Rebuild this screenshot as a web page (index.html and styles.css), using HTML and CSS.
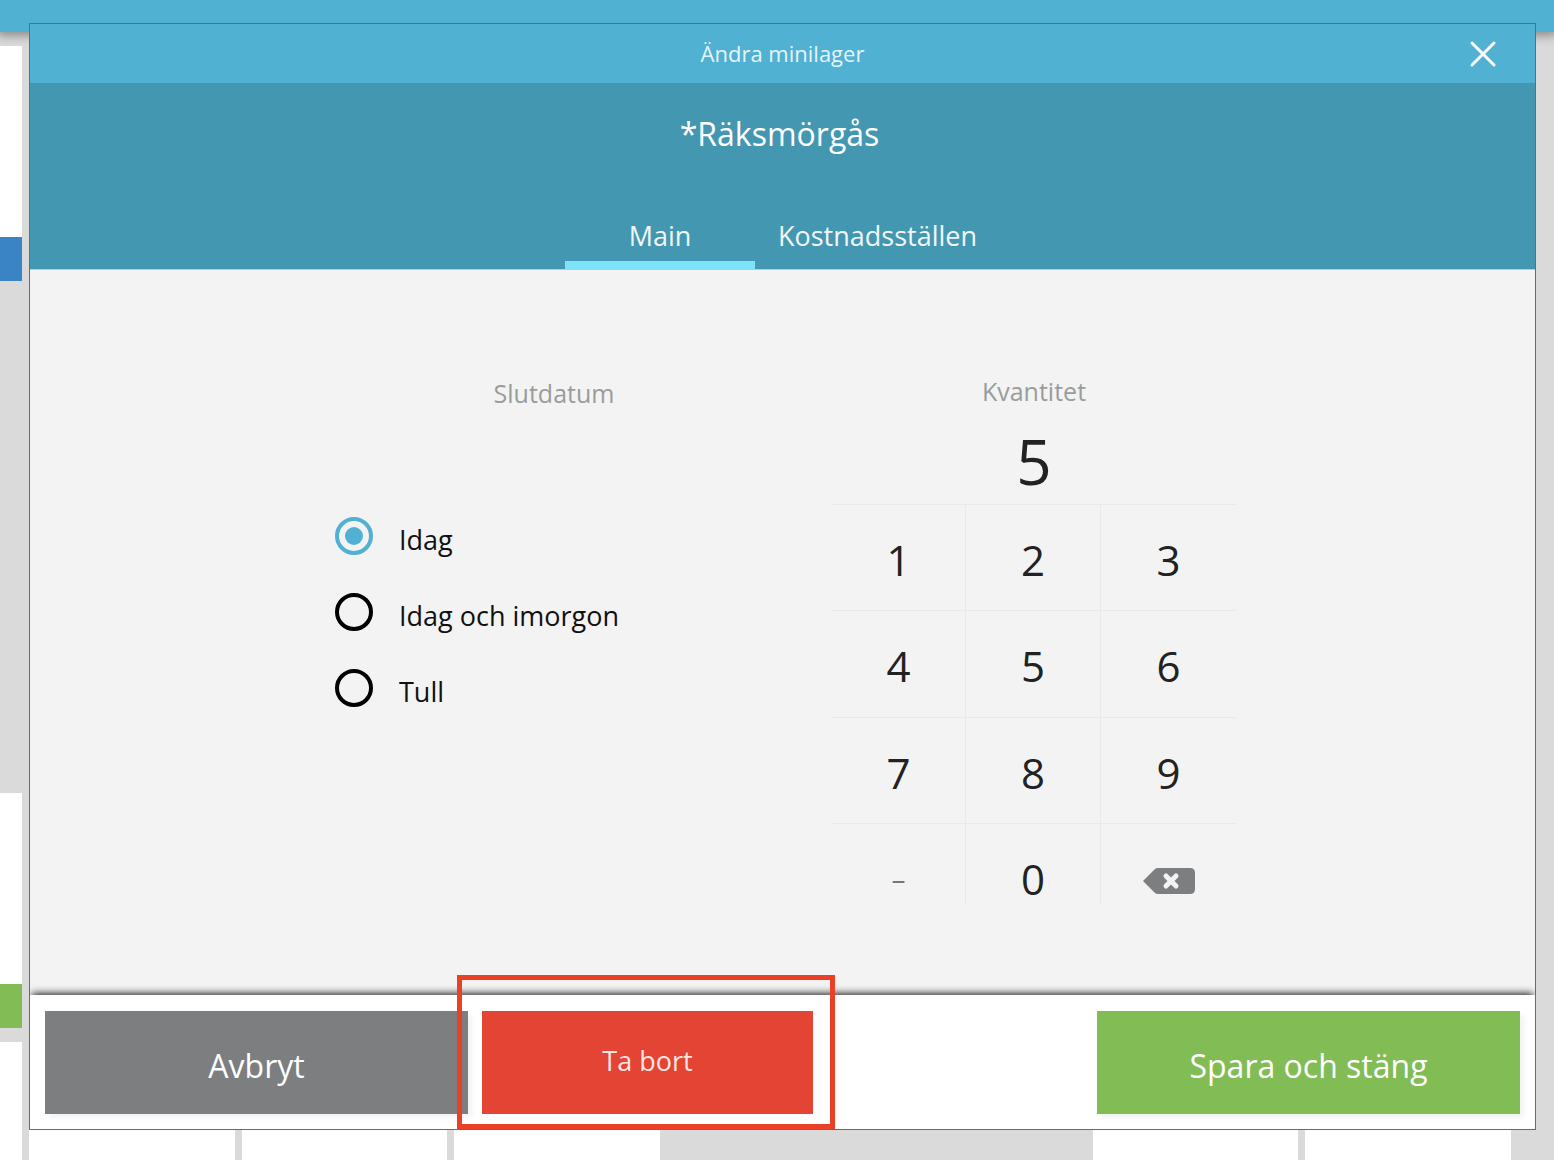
FILE: index.html
```html
<!DOCTYPE html>
<html lang="sv">
<head>
<meta charset="utf-8">
<meta name="viewport" content="width=device-width, initial-scale=1">
<title>Ändra minilager</title>
<link rel="stylesheet" href="styles.css">
</head>
<body>
<div class="screen">
  <div class="backdrop" aria-hidden="true">
    <div class="topbar"></div>
    <div class="tiles">
      <div class="tile tile-blue col-1 row-1"></div>
      <div class="tile tile-green col-1 row-4"></div>
      <div class="tile col-1 row-5"></div>
      <div class="tile col-2 row-5"></div>
      <div class="tile col-3 row-5"></div>
      <div class="tile col-4 row-5"></div>
      <div class="tile col-7 row-5"></div>
      <div class="tile col-8 row-5"></div>
    </div>
  </div>

  <div class="dialog" role="dialog" aria-modal="true" aria-labelledby="dialog-title">
    <header class="titlebar">
      <h1 class="dialog-title" id="dialog-title">Ändra minilager</h1>
      <button class="close" type="button" aria-label="Stäng">
        <svg width="28" height="28" viewBox="0 0 28 28" fill="none" stroke="#fff" stroke-width="3" stroke-linecap="round"><path d="M3 3L25 25M25 3L3 25"/></svg>
      </button>
    </header>

    <div class="product">
      <h2 class="product-name">*Räksmörgås</h2>
      <div class="tabs" role="tablist">
        <button class="tab tab-active" type="button" role="tab" aria-selected="true">Main</button>
        <button class="tab" type="button" role="tab" aria-selected="false">Kostnadsställen</button>
      </div>
    </div>

    <main class="content">
      <div class="end-date" role="radiogroup" aria-labelledby="end-date-label">
        <h3 class="label" id="end-date-label">Slutdatum</h3>
        <div class="options">
          <label class="option"><input class="radio" type="radio" name="end-date" checked><span class="option-text">Idag</span></label>
          <label class="option"><input class="radio" type="radio" name="end-date"><span class="option-text">Idag och imorgon</span></label>
          <label class="option"><input class="radio" type="radio" name="end-date"><span class="option-text">Tull</span></label>
        </div>
      </div>

      <div class="quantity">
        <h3 class="label" id="quantity-label">Kvantitet</h3>
        <output class="quantity-value" aria-labelledby="quantity-label">5</output>
        <div class="keypad">
          <button class="key" type="button">1</button>
          <button class="key" type="button">2</button>
          <button class="key" type="button">3</button>
          <button class="key" type="button">4</button>
          <button class="key" type="button">5</button>
          <button class="key" type="button">6</button>
          <button class="key" type="button">7</button>
          <button class="key" type="button">8</button>
          <button class="key" type="button">9</button>
          <button class="key key-minus" type="button">–</button>
          <button class="key" type="button">0</button>
          <button class="key" type="button" aria-label="Radera">
            <svg class="erase" width="54" height="28" viewBox="0 0 54 28"><path fill="#7d7e80" d="M1 14L13 2Q14 1 16 1H48Q53 1 53 6V22Q53 27 48 27H16Q14 27 13 26Z"/><path stroke="#f3f3f3" stroke-width="5" stroke-linecap="round" d="M24 9L34 19M34 9L24 19"/></svg>
          </button>
        </div>
      </div>
    </main>

    <footer class="actions">
      <button class="action action-cancel" type="button">Avbryt</button>
      <div class="marked">
        <button class="action action-delete" type="button">Ta bort</button>
      </div>
      <button class="action action-save" type="button">Spara och stäng</button>
    </footer>
  </div>
</div>
</body>
</html>
```
FILE: styles.css
```css
* {
  box-sizing: border-box;
}

body {
  margin: 0;
  background: #dadada;
  font-family: "Open Sans", "Noto Sans", sans-serif;
}

button {
  margin: 0;
  padding: 0;
  border: 0;
  background: none;
  color: inherit;
  font: inherit;
}

h1, h2, h3 {
  margin: 0;
  font-weight: 400;
}

/* The dialog is stacked over the till screen in one grid cell. */
.screen {
  display: grid;
  min-height: 100vh;
}

.backdrop,
.dialog {
  grid-area: 1 / 1;
  min-width: 0;
}

.backdrop {
  height: 0;
  min-height: 100%;
  overflow: hidden;
}

.topbar {
  height: 32px;
  background: #50b1d2;
  box-shadow: 0 0 10px 3px rgba(0, 0, 0, 0.4);
}

.tiles {
  display: grid;
  grid-template-columns: repeat(8, 1fr);
  grid-template-rows: repeat(5, 235px);
  gap: 14px 7px;
  margin: 14px 43px 0 -184px;
}

.tile { background: #fff; }
.tile-blue { border-bottom: 44px solid #3a83c4; }
.tile-green { border-bottom: 44px solid #82bc55; }

.col-1 { grid-column: 1; }
.col-2 { grid-column: 2; }
.col-3 { grid-column: 3; }
.col-4 { grid-column: 4; }
.col-7 { grid-column: 7; }
.col-8 { grid-column: 8; }
.row-1 { grid-row: 1; }
.row-4 { grid-row: 4; }
.row-5 { grid-row: 5; }

.dialog {
  display: flex;
  flex-direction: column;
  margin: 23px 18px 30px 29px;
  border: 1px solid #2f77c2;
  background: #f3f3f3;
  z-index: 1;
}

.titlebar {
  display: grid;
  grid-template-columns: 1fr auto 1fr;
  align-items: center;
  height: 59px;
  padding-right: 38px;
  padding-left: 38px;
  background: #50b1d2;
  color: #e6f4f9;
}

.dialog-title {
  grid-column: 2;
  padding-bottom: 2px;
  font-size: 22px;
  line-height: 32px;
}

.close {
  display: flex;
  justify-self: end;
}

.product {
  display: flex;
  flex-direction: column;
  align-items: center;
  justify-content: space-between;
  height: 187px;
  padding-top: 29px;
  border-bottom: 1px solid #c4c8ca;
  background: #4497b0;
  color: #fff;
}

.product-name {
  padding-right: 6px;
  font-size: 32px;
  line-height: 44px;
}

.tabs {
  display: flex;
}

.tab {
  min-width: 190px;
  padding: 0 23px;
  border-bottom: 8px solid transparent;
  color: #f0f8fa;
  font-size: 27px;
  line-height: 50px;
}

.tab-active {
  border-bottom-color: #7de3fb;
}

.content {
  display: flex;
  flex: 1;
  justify-content: center;
  gap: 59px;
  padding: 105px 0 90px 6px;
}

.label {
  color: #9a9c9c;
  font-size: 25px;
  line-height: 32px;
  text-align: center;
}

.end-date {
  width: 438px;
  padding-top: 2px;
}

.options {
  display: flex;
  flex-direction: column;
  gap: 32px;
  padding-top: 105px;
}

.option {
  display: flex;
  align-items: center;
  gap: 26px;
  height: 44px;
  color: #111;
  font-size: 27px;
  line-height: 36px;
}

.option-text {
  padding-top: 8px;
}

.radio {
  display: grid;
  place-content: center;
  width: 38px;
  height: 38px;
  margin: 0;
  border: 4px solid #000;
  border-radius: 50%;
  appearance: none;
}

.radio:checked {
  border-color: #50b1d2;
}

.radio:checked::before {
  width: 18px;
  height: 18px;
  border-radius: 50%;
  background: #50b1d2;
  content: "";
}

.quantity {
  display: flex;
  flex-direction: column;
  width: 404px;
}

.quantity-value {
  padding-top: 11px;
  color: #222;
  font-size: 62px;
  line-height: 86px;
  text-align: center;
}

.keypad {
  display: grid;
  grid-template-columns: 134px 135px 1fr;
  grid-template-rows: 106px 107px 106px 82px;
}

.key {
  display: flex;
  align-items: flex-start;
  justify-content: center;
  padding-top: 28px;
  border-top: 1px solid #e9e9e9;
  border-right: 1px solid #e9e9e9;
  color: #222;
  font-size: 42px;
  line-height: 53px;
}

.key:nth-child(3n) {
  border-right: 0;
}

.key-minus {
  color: #777;
  font-size: 28px;
}

.erase {
  margin-top: 15px;
}

.actions {
  display: flex;
  gap: 14px;
  padding: 16px 15px 15px;
  background: #fff;
  box-shadow: 0 -4px 7px -2px rgba(0, 0, 0, 0.8);
  clip-path: inset(-24px 0 0 0);
}

.action {
  height: 103px;
  color: #fff;
  font-size: 32px;
  line-height: 44px;
}

.action-cancel,
.action-save {
  width: 423px;
  padding-top: 6px;
  box-shadow: 4px 4px 5px rgba(0, 0, 0, 0.05);
}

.action-cancel { background: #7d7e80; }

.action-save {
  margin-left: auto;
  background: #82bc55;
}

.marked {
  position: relative;
}

/* Red frame drawn over the dialog round the delete button. */
.marked::after {
  position: absolute;
  inset: -36px -22px -15px -25px;
  border: 5px solid #e94026;
  content: "";
  pointer-events: none;
}

.action-delete {
  width: 331px;
  padding-bottom: 4px;
  background: #e44434;
  color: #fbe6e3;
  font-size: 27px;
}
```
